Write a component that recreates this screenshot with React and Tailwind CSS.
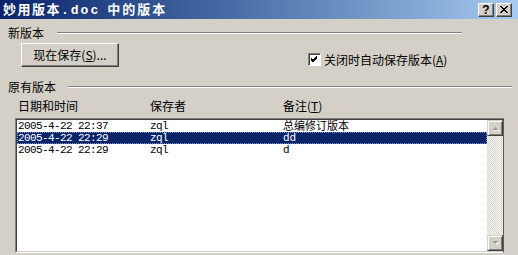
import React from "react";

const cjk = "font-['SimSun','Noto_Sans_CJK_SC',sans-serif]";
const mono = "font-['Liberation_Mono','DejaVu_Sans_Mono',monospace]";

function CaptionBtn({ children }) {
  return (
    <div className="w-[16px] h-[14px] bg-[#d4d0c8] border-t border-l border-white border-r border-b border-r-[#404040] border-b-[#404040] shadow-[inset_-1px_-1px_#808080] flex items-center justify-center">
      {children}
    </div>
  );
}

function Etched({ className }) {
  return <div className={"h-[2px] border-t border-[#808080] border-b border-b-white " + className} />;
}

function ScrollBtn({ up }) {
  return (
    <div className="w-[16px] h-[16px] bg-[#d4d0c8] border-t border-l border-[#d4d0c8] border-r border-b border-r-[#404040] border-b-[#404040] shadow-[inset_1px_1px_#ffffff,inset_-1px_-1px_#808080] flex items-center justify-center">
      <svg width="9" height="6" viewBox="0 0 9 6">
        {up ? (
          <>
            <polygon points="1.5,5 7.5,5 4.5,2" fill="#ffffff" transform="translate(1,1)" />
            <polygon points="1.5,5 7.5,5 4.5,2" fill="#9a9a9a" />
          </>
        ) : (
          <>
            <polygon points="1.5,1 7.5,1 4.5,4" fill="#ffffff" transform="translate(1,1)" />
            <polygon points="1.5,1 7.5,1 4.5,4" fill="#9a9a9a" />
          </>
        )}
      </svg>
    </div>
  );
}

const rows = [
  { d: "2005-4-22 22:37", u: "zql", n: "总编修订版本", sel: false },
  { d: "2005-4-22 22:29", u: "zql", n: "dd", sel: true },
  { d: "2005-4-22 22:29", u: "zql", n: "d", sel: false },
];

export default function App() {
  return (
    <div className={"w-[518px] h-[255px] overflow-hidden bg-[#d4d0c8] text-black text-[12px] leading-[12px] " + cjk}>
      {/* title bar */}
      <div className="h-[19px] flex items-center justify-between pl-[3px] pr-[6px] bg-linear-to-r from-[#0a246a] to-[#a6caf0]">
        <div className="text-white font-bold text-[13px] leading-[19px] flex items-baseline">
          <span className="tracking-[1.5px]">妙用版本</span>
          <span className={mono + " text-[13px] font-bold tracking-[2px]"}>.doc</span>
          <span className="ml-[7px] tracking-[2px]">中的版本</span>
        </div>
        <div className="flex gap-[2px]">
          <CaptionBtn>
            <span className="font-['Liberation_Sans',sans-serif] font-bold text-[12px] leading-[12px]">?</span>
          </CaptionBtn>
          <CaptionBtn>
            <svg width="8" height="7" viewBox="0 0 8 7">
              <path d="M0 0 L7 7 M1 0 L8 7 M7 0 L0 7 M8 0 L1 7" stroke="#000" strokeWidth="1" />
            </svg>
          </CaptionBtn>
        </div>
      </div>

      <div className="pl-[8px]">
        {/* 新版本 */}
        <div className="mt-[8px] flex items-center">
          <span>新版本</span>
          <Etched className="ml-[13px] w-[405px]" />
        </div>

        <div className="mt-[4px] flex items-end">
          <div className="ml-[13px] w-[98px] h-[24px] border-t border-l border-white border-r border-b border-r-[#404040] border-b-[#404040] shadow-[inset_-1px_-1px_#808080] flex items-center justify-center">
            <span>现在保存(<u>S</u>)...</span>
          </div>
          <div className="ml-[189px] flex items-center mb-[1px]">
            <div className="w-[13px] h-[13px] bg-white border-t border-l border-[#808080] border-r border-b border-r-white border-b-white shadow-[inset_1px_1px_#404040] flex items-center justify-center">
              <svg width="7" height="7" viewBox="0 0 7 7">
                <path d="M0 2 L2 4 L6 0 M0 3 L2 5 L6 1 M0 4 L2 6 L6 2" stroke="#000" strokeWidth="1" fill="none" />
              </svg>
            </div>
            <span className="ml-[3px]">关闭时自动保存版本(<u>A</u>)</span>
          </div>
        </div>

        {/* 原有版本 */}
        <div className="mt-[14px] flex items-center">
          <span>原有版本</span>
          <Etched className="ml-[12px] w-[444px]" />
        </div>

        <div className="mt-[7px] flex pl-[10px]">
          <span className="w-[132px]">日期和时间</span>
          <span className="w-[133px]">保存者</span>
          <span>备注(<u>T</u>)</span>
        </div>

        {/* list box */}
        <div className="mt-[6px] ml-[7px] w-[489px] h-[135px] border-t border-l border-[#808080] border-r border-b border-r-[#5a5a5a] border-b-white flex">
          <div className="flex-1 flex border-t border-l border-[#404040] border-b border-b-[#d4d0c8]">
            <div className="flex-1 bg-white">
              {rows.map((r, i) => (
                <div
                  key={i}
                  className={
                    "h-[12px] flex items-center pl-[1px] " +
                    (r.sel ? "bg-[#0a246a] text-white outline-1 outline-dotted outline-[#7f8fb8] -outline-offset-1" : "")
                  }
                >
                  <span className={mono + " w-[132px] text-[11px] tracking-[-0.6px] leading-[12px]"}>{r.d}</span>
                  <span className={mono + " w-[133px] text-[11px] tracking-[-0.6px] leading-[12px]"}>{r.u}</span>
                  <span className={(r.n.length < 3 ? mono + " text-[11px] leading-[12px]" : "text-[11px] leading-[11px] self-start")}>{r.n}</span>
                </div>
              ))}
            </div>
            <div className="w-[16px] flex flex-col">
              <ScrollBtn up />
              <div className="flex-1 bg-[repeating-conic-gradient(#d4d0c8_0%_25%,#ffffff_0%_50%)] bg-[length:2px_2px]" />
              <ScrollBtn />
            </div>
          </div>
        </div>
      </div>
    </div>
  );
}
